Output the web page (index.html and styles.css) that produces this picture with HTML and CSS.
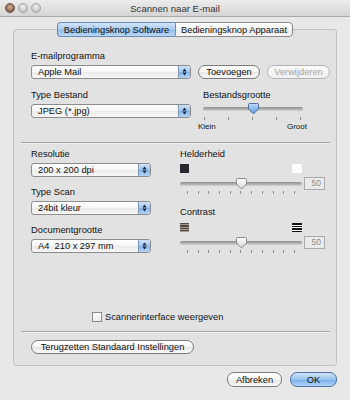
FILE: index.html
```html
<!DOCTYPE html>
<html lang="nl">
<head>
<meta charset="utf-8">
<title>Scannen naar E-mail</title>
<link rel="stylesheet" href="styles.css">
</head>
<body>
<div class="titlebar">
  <div class="lights"><span class="light close"></span><span class="light"></span><span class="light"></span></div>
  <div class="title">Scannen naar E-mail</div>
  <div></div>
</div>
<div class="tabs">
  <span class="tab active">Bedieningsknop Software</span><span class="tab">Bedieningsknop Apparaat</span>
</div>
<div class="panel">
  <div class="sec1">
    <div class="label">E-mailprogramma</div>
    <div></div>
    <div class="select wide"><span class="val">Apple Mail</span><span class="arrows"><svg width="5" height="8" viewBox="0 0 5 8"><path d="M0.3 3.4 L2.5 0.6 L4.7 3.4Z M0.3 4.6 L2.5 7.4 L4.7 4.6Z" fill="#1d2a44"/></svg></span></div>
    <div class="btnrow"><button class="btn add">Toevoegen</button><button class="btn del" disabled>Verwijderen</button></div>
    <div class="label r3">Type Bestand</div>
    <div class="label r3 lbl-size">Bestandsgrootte</div>
    <div class="select wide"><span class="val">JPEG (*.jpg)</span><span class="arrows"><svg width="5" height="8" viewBox="0 0 5 8"><path d="M0.3 3.4 L2.5 0.6 L4.7 3.4Z M0.3 4.6 L2.5 7.4 L4.7 4.6Z" fill="#1d2a44"/></svg></span></div>
    <div class="fsize">
      <div class="trackwrap">
        <div class="track"></div>
        <svg class="thumb" width="11" height="11" viewBox="0 0 11 11"><defs><linearGradient id="gb" x1="0" y1="0" x2="0" y2="1"><stop offset="0" stop-color="#c4dcf6"/><stop offset="0.5" stop-color="#8dbaeb"/><stop offset="1" stop-color="#5f9be0"/></linearGradient></defs><path d="M1.5 0.5 H9.5 Q10.5 0.5 10.5 1.5 V6 L6 10.5 H5 L0.5 6 V1.5 Q0.5 0.5 1.5 0.5Z" fill="url(#gb)" stroke="#4d6f99"/></svg>
      </div>
      <div class="ticks t5"><i></i><i></i><i></i><i></i><i></i></div>
      <div class="scale"><span>Klein</span><span>Groot</span></div>
    </div>
  </div>
  <div class="sep"></div>
  <div class="sec2">
    <div class="col">
      <div class="label">Resolutie</div>
      <div class="select narrow"><span class="val">200 x 200 dpi</span><span class="arrows"><svg width="5" height="8" viewBox="0 0 5 8"><path d="M0.3 3.4 L2.5 0.6 L4.7 3.4Z M0.3 4.6 L2.5 7.4 L4.7 4.6Z" fill="#1d2a44"/></svg></span></div>
      <div class="label gap">Type Scan</div>
      <div class="select narrow"><span class="val">24bit kleur</span><span class="arrows"><svg width="5" height="8" viewBox="0 0 5 8"><path d="M0.3 3.4 L2.5 0.6 L4.7 3.4Z M0.3 4.6 L2.5 7.4 L4.7 4.6Z" fill="#1d2a44"/></svg></span></div>
      <div class="label gap">Documentgrootte</div>
      <div class="select narrow"><span class="val">A4&nbsp; 210 x 297 mm</span><span class="arrows"><svg width="5" height="8" viewBox="0 0 5 8"><path d="M0.3 3.4 L2.5 0.6 L4.7 3.4Z M0.3 4.6 L2.5 7.4 L4.7 4.6Z" fill="#1d2a44"/></svg></span></div>
    </div>
    <div class="col">
      <div class="label">Helderheid</div>
      <div class="icons"><span class="sq dark"></span><span class="sq white"></span></div>
      <div class="srow">
        <div class="trackwrap long">
          <div class="track"></div>
          <svg class="thumb" width="11" height="11" viewBox="0 0 11 11"><defs><linearGradient id="gw" x1="0" y1="0" x2="0" y2="1"><stop offset="0" stop-color="#ffffff"/><stop offset="1" stop-color="#d8d8d8"/></linearGradient></defs><path d="M1.5 0.5 H9.5 Q10.5 0.5 10.5 1.5 V6 L6 10.5 H5 L0.5 6 V1.5 Q0.5 0.5 1.5 0.5Z" fill="url(#gw)" stroke="#8a8a8a"/></svg>
        </div>
        <div class="num">50</div>
      </div>
      <div class="ticks t11"><i></i><i></i><i></i><i></i><i></i><i></i><i></i><i></i><i></i><i></i><i></i></div>
      <div class="label contrast">Contrast</div>
      <div class="icons ic2"><span class="sq lowc"></span><span class="sq highc"></span></div>
      <div class="srow">
        <div class="trackwrap long">
          <div class="track"></div>
          <svg class="thumb" width="11" height="11" viewBox="0 0 11 11"><path d="M1.5 0.5 H9.5 Q10.5 0.5 10.5 1.5 V6 L6 10.5 H5 L0.5 6 V1.5 Q0.5 0.5 1.5 0.5Z" fill="url(#gw)" stroke="#8a8a8a"/></svg>
        </div>
        <div class="num">50</div>
      </div>
      <div class="ticks t11"><i></i><i></i><i></i><i></i><i></i><i></i><i></i><i></i><i></i><i></i><i></i></div>
    </div>
  </div>
  <div class="spacer"></div>
  <label class="check"><span class="box"></span>Scannerinterface weergeven</label>
  <div class="sep sep2"></div>
  <button class="btn reset">Terugzetten Standaard Instellingen</button>
</div>
<div class="footer">
  <button class="btn cancel">Afbreken</button><button class="btn ok">OK</button>
</div>
</body>
</html>
```
FILE: styles.css
```css
* { box-sizing: border-box; }
html, body { margin: 0; }
body {
  width: 350px;
  height: 400px;
  overflow: hidden;
  background: #e8e8e8;
  font-family: "Liberation Sans", Arial, sans-serif;
  font-size: 9.3px;
  color: #111111;
}
.titlebar {
  height: 17px;
  display: grid;
  grid-template-columns: 1fr auto 1fr;
  align-items: center;
  background: linear-gradient(#ececec, #d4d4d4);
  border-bottom: 1px solid #a9a9a9;
}
.lights { display: flex; gap: 3px; padding-left: 5px; }
.light {
  width: 10px; height: 10px; border-radius: 50%;
  background: radial-gradient(circle at 50% 35%, #f2f2f2, #c4c4c4 70%, #a8a8a8);
  border: 1px solid #a2a2a2;
}
.light.close {
  background: radial-gradient(circle at 50% 40%, #d8b8a0, #8e6a55 60%, #5e4536);
  border-color: #6a5040;
}
.title { font-size: 9.6px; color: #333; }

.tabs {
  display: flex;
  justify-content: center;
  margin-top: 5px;
  margin-bottom: -8px;
  position: relative;
  z-index: 1;
}
.tab {
  width: 118px; height: 15px;
  display: flex; align-items: center; justify-content: center;
  border: 1px solid #8a8a8a;
  background: linear-gradient(#ffffff, #f5f5f5 50%, #e9e9e9 51%, #f7f7f7);
}
.tab:first-child { border-radius: 4px 0 0 4px; border-right: none; }
.tab:last-child { border-radius: 0 4px 4px 0; }
.tab.active {
  background: linear-gradient(#d2e4f8, #a9cbf0 50%, #8fbaeb 51%, #bcd8f6);
  border-color: #6d8db4;
}

.panel {
  margin: 0 13px;
  height: 337px;
  border: 1px solid #c2c2c2;
  border-radius: 3px;
  background: #e2e2e2;
  padding: 0 6px 11px 7px;
  display: flex;
  flex-direction: column;
}
.label { height: 12px; line-height: 12px; white-space: nowrap; }

.sec1 {
  padding: 20px 0 0 10px;
  display: grid;
  grid-template-columns: 160px 1fr;
  column-gap: 7px;
  row-gap: 3px;
  align-items: start;
}
.sec1 .r3 { margin-top: 7px; }
.lbl-size { padding-left: 5px; }

.select {
  height: 14px;
  display: flex;
  border: 1px solid #8c8c8c;
  border-radius: 3px;
  background: linear-gradient(#ffffff, #f5f5f5 50%, #eaeaea 51%, #f7f7f7);
  overflow: hidden;
}
.select.wide { width: 160px; }
.select.narrow { width: 120px; }
.val { flex: 1; padding-left: 6px; line-height: 12px; white-space: nowrap; }
.arrows {
  width: 12px;
  display: flex; align-items: center; justify-content: center;
  border-left: 1px solid #7c96b8;
  background: linear-gradient(#cfe2f8, #9fc5ee 50%, #84b3e8 51%, #b5d4f5);
}

.btnrow { display: flex; gap: 7px; }
.btn {
  height: 14px;
  padding: 0;
  border: 1px solid #7c7c7c;
  border-radius: 7px;
  background: linear-gradient(#ffffff, #f6f6f6 50%, #e6e6e6 51%, #fafafa);
  font-family: inherit;
  font-size: 9.3px;
  color: #111111;
  line-height: 12px;
}
.btn.add { width: 62px; }
.btn.del { width: 63px; color: #a3a3a3; border-color: #b3b3b3; background: linear-gradient(#fbfbfb, #f0f0f0); }

.fsize { width: 109px; }
.trackwrap { position: relative; height: 10px; display: flex; align-items: center; }
.fsize .trackwrap { margin: 0 4px 0 5px; }
.track {
  flex: 1;
  height: 4px;
  border-radius: 2px;
  background: linear-gradient(#8e8e8e, #b4b4b4 60%, #d6d6d6);
}
.thumb { position: absolute; left: 50%; top: -1px; margin-left: -5.5px; }
.ticks { display: flex; justify-content: space-between; margin-top: 3px; height: 3px; }
.ticks i { width: 1px; height: 3px; background: #8c8c8c; }
.fsize .ticks { margin: 3px 6px 0 6px; }
.scale { display: flex; justify-content: space-between; font-size: 8px; line-height: 9px; margin-top: 2px; }

.sep { height: 1px; background: #a4a4a4; margin-top: 11px; box-shadow: 0 1px 0 #efefef; }

.sec2 {
  padding: 5px 0 0 10px;
  display: grid;
  grid-template-columns: 120px 1fr;
  column-gap: 29px;
}
.col { display: flex; flex-direction: column; align-items: flex-start; }
.col .select { margin-top: 3px; }
.col .label.gap { margin-top: 9px; }
.icons { width: 122px; display: flex; justify-content: space-between; margin-top: 4px; height: 10px; }
.sq { width: 9px; height: 9px; }
.sq.dark { background: #2b2630; }
.sq.white { background: #ffffff; width: 10px; }
.sq.lowc { background: repeating-linear-gradient(#4e4a48 0 1.4px, #a8988c 1.4px 2.3px); }
.sq.highc { width: 10px; background: repeating-linear-gradient(#111 0 1.5px, #fff 1.5px 2.5px); }
.srow { display: flex; align-items: center; margin-top: 3px; height: 13px; }
.trackwrap.long { width: 122px; }
.num {
  width: 21px; height: 13px; margin-left: 2px;
  border: 1px solid #aaaaaa;
  background: #ebebeb;
  color: #8a8a8a;
  text-align: right;
  padding-right: 3px;
  line-height: 11px;
  font-size: 8.5px;
}
.col .ticks.t11 { width: 122px; padding: 0 7px; margin-top: 1px; }
.label.contrast { margin-top: 12px; }
.icons.ic2 { margin-top: 5px; }

.spacer { flex: 1; }
.check { display: flex; align-items: center; height: 10px; padding-left: 71px; gap: 3px; }
.box {
  width: 10px; height: 10px;
  border: 1px solid #8a8a8a;
  background: linear-gradient(#ffffff, #ececec);
}
.sep2 { margin-top: 9px; }
.btn.reset { width: 163px; margin: 8px 0 0 10px; }

.footer { display: flex; justify-content: flex-end; gap: 8px; padding-right: 13px; margin-top: 6px; }
.btn.cancel { width: 55px; height: 15px; }
.btn.ok {
  width: 47px; height: 15px;
  border-color: #4d72a3;
  background: linear-gradient(#d0e3f8, #98c2ef 50%, #77ade9 51%, #b2d4f7);
}
```
